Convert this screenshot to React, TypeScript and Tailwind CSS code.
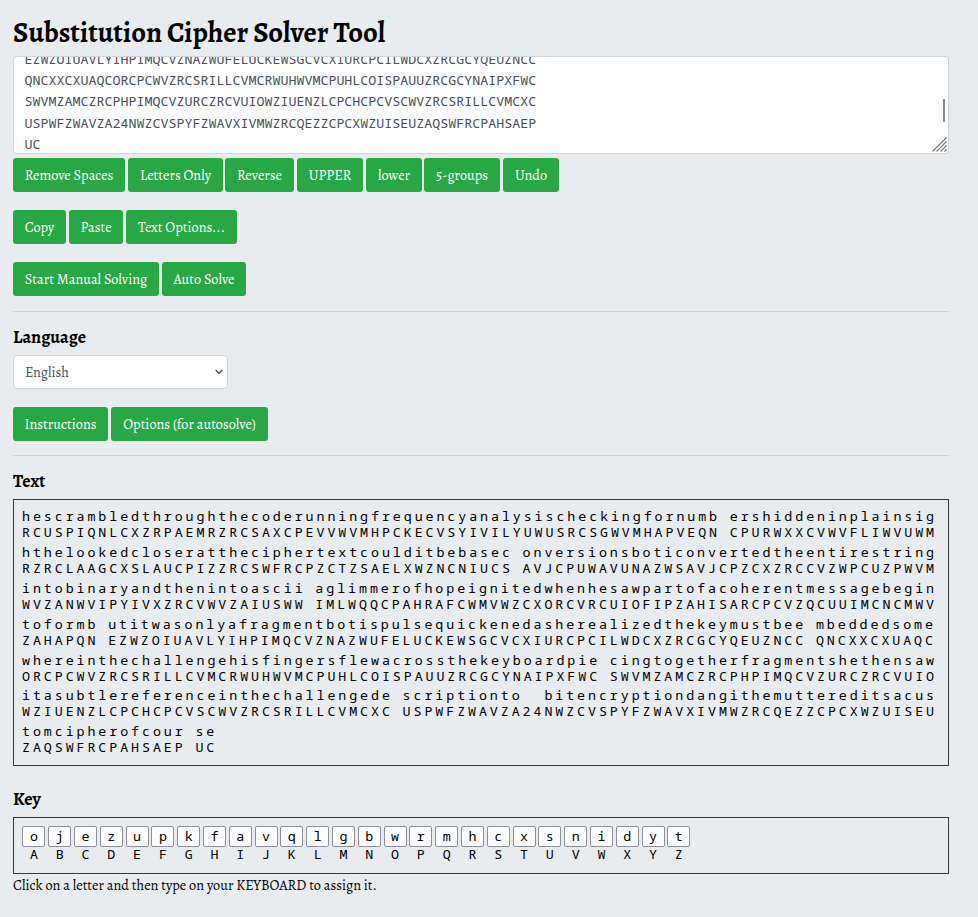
import React from "react";

const cipherLines = [
  "EZWZOIUAVLYIHPIMQCVZNAZWUFELUCKEWSGCVCXIURCPCILWDCXZRCGCYQEUZNCC",
  "QNCXXCXUAQCORCPCWVZRCSRILLCVMCRWUHWVMCPUHLCOISPAUUZRCGCYNAIPXFWC",
  "SWVMZAMCZRCPHPIMQCVZURCZRCVUIOWZIUENZLCPCHCPCVSCWVZRCSRILLCVMCXC",
  "USPWFZWAVZA24NWZCVSPYFZWAVXIVMWZRCQEZZCPCXWZUISEUZAQSWFRCPAHSAEP",
  "UC",
];

const rows: [string, string][] = [
  [
    "hescrambledthroughthecoderunningfrequencyanalysischeckingfornumb ershiddeninplainsig",
    "RCUSPIQNLCXZRPAEMRZRCSAXCPEVVWVMHPCKECVSYIVILYUWUSRCSGWVMHAPVEQN CPURWXXCVWVFLIWVUWM",
  ],
  [
    "hthelookedcloserattheciphertextcoulditbebasec onversionsboticonvertedtheentirestring",
    "RZRCLAAGCXSLAUCPIZZRCSWFRCPZCTZSAELXWZNCNIUCS AVJCPUWAVUNAZWSAVJCPZCXZRCCVZWPCUZPWVM",
  ],
  [
    "intobinaryandthenintoascii aglimmerofhopeignitedwhenhesawpartofacoherentmessagebegin",
    "WVZANWVIPYIVXZRCVWVZAIUSWW IMLWQQCPAHRAFCWMVWZCXORCVRCUIOFIPZAHISARCPCVZQCUUIMCNCMWV",
  ],
  [
    "toformb utitwasonlyafragmentbotispulsequickenedasherealizedthekeymustbee mbeddedsome",
    "ZAHAPQN EZWZOIUAVLYIHPIMQCVZNAZWUFELUCKEWSGCVCXIURCPCILWDCXZRCGCYQEUZNCC QNCXXCXUAQC",
  ],
  [
    "whereinthechallengehisfingersflewacrossthekeyboardpie cingtogetherfragmentshethensaw",
    "ORCPCWVZRCSRILLCVMCRWUHWVMCPUHLCOISPAUUZRCGCYNAIPXFWC SWVMZAMCZRCPHPIMQCVZURCZRCVUIO",
  ],
  [
    "itasubtlereferenceinthechallengede scriptionto  bitencryptiondangithemuttereditsacus",
    "WZIUENZLCPCHCPCVSCWVZRCSRILLCVMCXC USPWFZWAVZA24NWZCVSPYFZWAVXIVMWZRCQEZZCPCXWZUISEU",
  ],
  ["tomcipherofcour se", "ZAQSWFRCPAHSAEP UC"],
];

const keyLetters = "ojezupkfavqlgbwrmhcxsnidyt";
const alphabet = "ABCDEFGHIJKLMNOPQRSTUVWXYZ";

function Button({ label, size }: { label: string; size: string }) {
  return (
    <button
      className={`h-[34px] shrink-0 rounded-[3px] bg-[#28a745] text-center text-[14.3px] leading-[34px] whitespace-nowrap text-white ${size}`}
    >
      {label}
    </button>
  );
}

function Heading({ children }: { children: React.ReactNode }) {
  return <h2 className="text-[17.9px] leading-[22px] font-bold">{children}</h2>;
}

export default function App() {
  return (
    <div className="h-[917px] w-[978px] overflow-hidden bg-[#e8ecef] pt-[17px] pr-[29px] pl-[13px] font-['Alegreya','Liberation_Serif',serif] text-black">
      <h1 className="h-[39px] text-[28.6px] leading-[32px] font-bold whitespace-nowrap">
        <span>Substitution Cipher Solver Tool</span>
      </h1>

      <div className="relative h-[98px] overflow-hidden rounded-[4px] border border-[#ced4da] bg-white pl-[10.5px] font-['Noto_Sans_Mono','DejaVu_Sans_Mono',monospace] text-[13.34px] text-[#495057]">
        <div className="-mt-[8.5px]">
          {cipherLines.map((line) => (
            <div key={line} className="h-[21.4px] leading-[21.4px]">
              {line}
            </div>
          ))}
        </div>
        <div className="absolute top-[42px] right-[3px] h-[23px] w-[2px] bg-[#8a8a8d]" />
        <svg className="absolute right-[1px] bottom-[1px]" width="15" height="15" viewBox="0 0 15 15" fill="none" stroke="#77777a" strokeWidth="1.1">
          <path d="M0.5 14.5 14.5 0.5M4.5 14.5l10-10M8.5 14.5l6-6M12.5 14.5l2-2" />
        </svg>
      </div>

      <div className="mt-1 flex">
        <Button label="Remove Spaces" size="w-[112px] mr-[3px]" />
        <Button label="Letters Only" size="w-[95px] mr-[2px]" />
        <Button label="Reverse" size="w-[69px] mr-[3px]" />
        <Button label="UPPER" size="w-[66px] mr-[3px]" />
        <Button label="lower" size="w-[56px] mr-[2px]" />
        <Button label="5-groups" size="w-[76px] mr-[3px]" />
        <Button label="Undo" size="w-[56px]" />
      </div>
      <div className="mt-[18px] flex gap-[3px]">
        <Button label="Copy" size="w-[53px]" />
        <Button label="Paste" size="w-[54px]" />
        <Button label="Text Options..." size="w-[111px]" />
      </div>
      <div className="mt-[18px] flex gap-[3px]">
        <Button label="Start Manual Solving" size="w-[146px]" />
        <Button label="Auto Solve" size="w-[84px]" />
      </div>

      <hr className="mt-[15px] mb-[14px] border-[#ced4d8]" />
      <Heading>Language</Heading>
      <div className="mt-[7px] flex h-[34px] w-[215px] items-center justify-between rounded-[4px] border border-[#ced4da] bg-white pr-1 pl-[11px] text-[14.3px] text-[#495057]">
        <span className="pt-px">English</span>
        <svg width="8" height="6" viewBox="0 0 8 6" fill="none" stroke="#495057" strokeWidth="1.4">
          <path d="m.7.9 3.3 3.3L7.3.9" />
        </svg>
      </div>
      <div className="mt-[18px] flex gap-[3px]">
        <Button label="Instructions" size="w-[95px]" />
        <Button label="Options (for autosolve)" size="w-[157px]" />
      </div>

      <hr className="mt-[14px] mb-[14px] border-[#ced4d8]" />
      <Heading>Text</Heading>
      <div className="mt-[7px] h-[267px] border border-[#343a40] pt-[8.35px] pl-2 font-['Noto_Sans_Mono','DejaVu_Sans_Mono',monospace] text-[13.34px]">
        {rows.map(([plain, cipher]) => (
          <div key={cipher} className="flex h-[35.8px]">
            {cipher.split("").map((c, i) => (
              <div
                key={i}
                className={c === " " ? "w-[9.8px] shrink-0" : "w-[10.91px] shrink-0"}
              >
                <div className="h-4 leading-4 whitespace-pre">{plain[i]}</div>
                <div className="h-4 leading-4 whitespace-pre">{c}</div>
              </div>
            ))}
          </div>
        ))}
      </div>

      <div className="mt-[22px]">
        <Heading>Key</Heading>
      </div>
      <div className="mt-[7px] flex h-[57px] gap-[2.8px] border border-[#343a40] pt-2 pl-[8.4px] font-['Noto_Sans_Mono','DejaVu_Sans_Mono',monospace] text-[13.34px]">
        {alphabet.split("").map((c, i) => (
          <div key={c} className="w-[23px] shrink-0 text-center">
            <div className="h-[21px] rounded-[2px] border border-[#8f8f9d] bg-white leading-[19px]">
              {keyLetters[i]}
            </div>
            <div className="h-[14px] leading-[14px]">{c}</div>
          </div>
        ))}
      </div>
      <p className="mt-px text-[14.3px] leading-5 whitespace-nowrap">
        <span>Click on a letter and then type on your KEYBOARD to assign it.</span>
      </p>
    </div>
  );
}
